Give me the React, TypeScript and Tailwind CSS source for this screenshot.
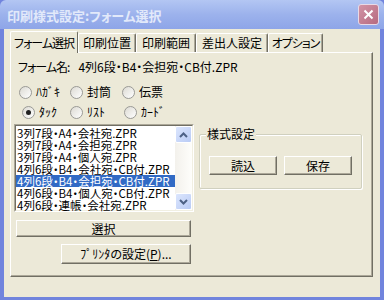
import React from 'react';

const FONT = "font-['Noto_Sans_CJK_JP','Noto_Sans_CJK_SC',sans-serif] [font-feature-settings:'palt']";

const TABS = ['フォーム選択', '印刷位置', '印刷範囲', '差出人設定', 'オプション'];
const TAB_WIDTHS = [68, 58, 60, 72, 55];

const FILES = [
  '3列7段・A4・会社宛.ZPR',
  '3列7段・A4・会担宛.ZPR',
  '3列7段・A4・個人宛.ZPR',
  '4列6段・B4・会社宛・CB付.ZPR',
  '4列6段・B4・会担宛・CB付.ZPR',
  '4列6段・B4・個人宛・CB付.ZPR',
  '4列6段・連帳・会社宛.ZPR',
];

function Radio({ label, checked, width }: { label: string; checked?: boolean; width?: number }) {
  return (
    <div className="flex items-center gap-[4px]" style={width ? { width } : undefined}>
      <span className="w-[13px] h-[13px] rounded-full border border-[#9a9a96] bg-gradient-to-br from-[#dcdad3] to-white flex items-center justify-center shrink-0">
        {checked && <span className="w-[5px] h-[5px] rounded-full bg-[#202020]" />}
      </span>
      <span className="text-[12px] leading-[12px] text-black whitespace-nowrap">{label}</span>
    </div>
  );
}

function Button({ children, className }: { children: React.ReactNode; className?: string }) {
  return (
    <div
      className={`flex items-center justify-center bg-[#ece9d8] border border-t-white border-l-white border-r-[#716f64] border-b-[#716f64] shadow-[inset_-1px_-1px_0_#aca899] text-[12px] leading-[12px] text-black whitespace-nowrap ${className ?? ''}`}
    >
      {children}
    </div>
  );
}

function Chevron({ up }: { up?: boolean }) {
  return (
    <svg width="9" height="6" viewBox="0 0 9 6">
      <path
        d={up ? 'M1 5 L4.5 1.5 L8 5' : 'M1 1 L4.5 4.5 L8 1'}
        fill="none"
        stroke="#4d6185"
        strokeWidth="2"
      />
    </svg>
  );
}

function ScrollButton({ up }: { up?: boolean }) {
  return (
    <div className="h-[17px] w-full rounded-[2px] border border-white bg-gradient-to-br from-[#dce6fd] to-[#b9cbf5] flex items-center justify-center">
      <Chevron up={up} />
    </div>
  );
}

export default function App() {
  return (
    <div className={`w-[384px] h-[300px] flex flex-col bg-[#7184dd] ${FONT}`}>
      {/* title bar */}
      <div className="h-[29px] shrink-0 flex items-center justify-between pl-[7px] pr-[5px] rounded-t-[6px] bg-gradient-to-b from-[#b3c6f3] via-[#9cb2ec] to-[#8ea5e8]">
        <span className="text-[13px] font-bold leading-[13px] text-[#e2e9fa] mt-[1px] whitespace-nowrap">
          印刷様式設定:フォーム選択
        </span>
        <div className="w-[21px] h-[21px] mb-[1px] rounded-[3px] border border-[#e8d9e6] bg-gradient-to-br from-[#d294a6] to-[#b66a80] flex items-center justify-center">
          <svg width="11" height="11" viewBox="0 0 11 11">
            <path d="M1.5 1.5 L9.5 9.5 M9.5 1.5 L1.5 9.5" stroke="white" strokeWidth="2" />
          </svg>
        </div>
      </div>

      {/* body */}
      <div className="flex-1 mx-[4px] mb-[3px] bg-[#ece9d8] pt-[2px] px-[6px]">
        {/* tabs */}
        <div className="flex items-end h-[21px] relative z-10">
          {TABS.map((t, i) => {
            const sel = i === 0;
            const kana = i === 0 || i === 4;
            return (
              <div
                key={t}
                style={{ width: TAB_WIDTHS[i] }}
                className={`${
                  sel
                    ? 'h-[22px] -mb-px bg-[#ece9d8] border-t border-l border-r border-t-white border-l-white border-r-[#716f64] rounded-t-[2px]'
                    : 'h-[19px] mt-[2px] border-t border-l border-r border-t-white border-l-white border-r-[#716f64] shadow-[inset_-1px_0_0_#aca899] rounded-t-[2px]'
                } flex items-center justify-center text-[12px] leading-[12px] text-black whitespace-nowrap ${
                  kana ? 'tracking-[-1px]' : ''
                }`}
              >
                {t}
              </div>
            );
          })}
        </div>

        {/* panel */}
        <div className="w-[363px] h-[225px] border border-t-white border-l-white border-r-[#716f64] border-b-[#716f64] shadow-[inset_-1px_-1px_0_#aca899] flex flex-col">
          <div className="mt-[8px] pl-[7px] flex gap-[9px] text-[12px] leading-[12px] text-black whitespace-nowrap">
            <span className="tracking-[-1px]">フォーム名:</span>
            <span>4列6段・B4・会担宛・CB付.ZPR</span>
          </div>

          <div className="mt-[9px] h-[20px] pl-[8px] flex items-center">
            <Radio label="ﾊｶﾞｷ" width={51} />
            <Radio label="封筒" width={52} />
            <Radio label="伝票" />
          </div>
          <div className="h-[20px] pl-[11px] flex items-center">
            <Radio label="ﾀｯｸ" checked width={48} />
            <Radio label="ﾘｽﾄ" width={54} />
            <Radio label="ｶｰﾄﾞ" />
          </div>

          <div className="mt-[2px] pl-[3px] flex">
            {/* left column */}
            <div className="w-[180px] flex flex-col">
              <div className="h-[88px] flex border border-t-[#aca899] border-l-[#aca899] border-r-white border-b-white">
                <div className="flex-1 flex border border-t-[#716f64] border-l-[#716f64] border-r-[#f1efe2] border-b-[#f1efe2] bg-white">
                  <div className="flex-1 min-w-0 flex flex-col pt-[1px]">
                    {FILES.map((f, i) => (
                      <div
                        key={f}
                        className={`h-[12px] pl-[1px] text-[11.5px] leading-[12px] whitespace-nowrap ${
                          i === 4 ? 'bg-[#316ac5] text-white' : 'text-black'
                        }`}
                      >
                        {f}
                      </div>
                    ))}
                  </div>
                  <div className="w-[17px] shrink-0 flex flex-col justify-between bg-gradient-to-r from-[#f3f1ec] to-[#fefefb]">
                    <ScrollButton up />
                    <ScrollButton />
                  </div>
                </div>
              </div>

              <Button className="mt-[8px] ml-[2px] w-[175px] h-[17px]">選択</Button>
              <Button className="mt-[7px] ml-[47px] w-[130px] h-[20px]">
                <span>
                  ﾌﾟﾘﾝﾀの設定(<span className="underline">P</span>)...
                </span>
              </Button>
            </div>

            {/* group box */}
            <div className="ml-[5px] mt-[10px] w-[163px] h-[55px] relative border border-[#d0d0bf] shadow-[inset_1px_1px_0_white,1px_1px_0_white] rounded-[2px] flex gap-[7px] pl-[9px] pt-[21px]">
              <span className="absolute -top-[7px] left-[6px] px-[1px] bg-[#ece9d8] text-[12px] leading-[12px] text-black whitespace-nowrap">
                様式設定
              </span>
              <Button className="w-[68px] h-[19px]">読込</Button>
              <Button className="w-[68px] h-[19px]">保存</Button>
            </div>
          </div>
        </div>
      </div>
    </div>
  );
}
